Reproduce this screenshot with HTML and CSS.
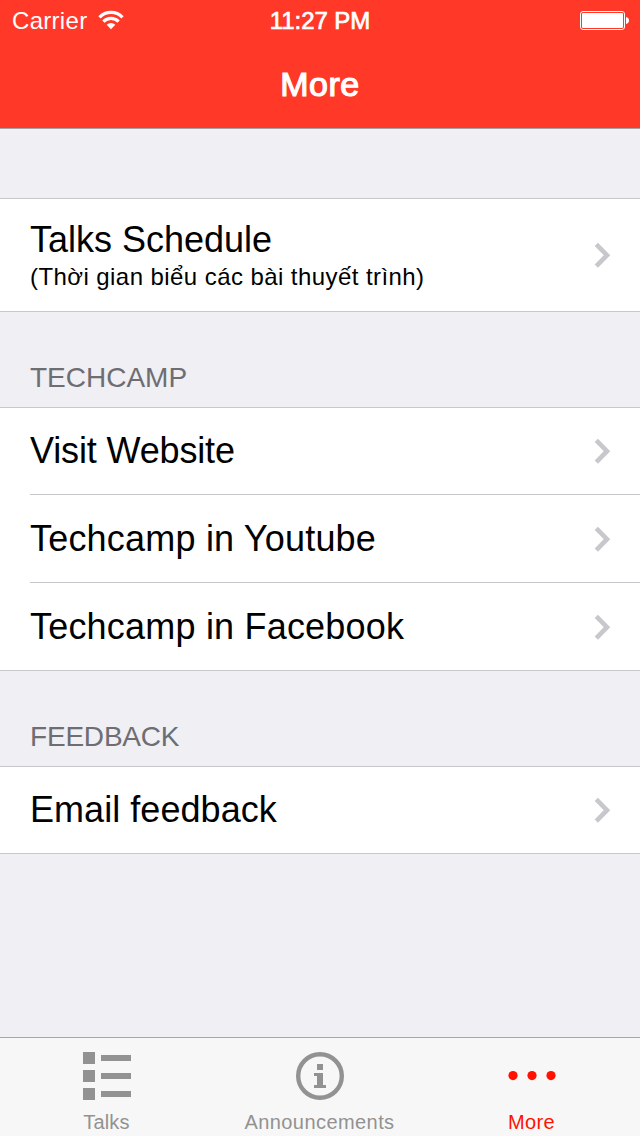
FILE: index.html
```html
<!DOCTYPE html>
<html lang="en">
<head>
<meta charset="utf-8">
<title>More</title>
<link rel="stylesheet" href="styles.css">
</head>
<body>
<svg class="defs" width="0" height="0" aria-hidden="true">
  <symbol id="chevron" viewBox="0 0 20 30"><path d="M4.3 4.3 15 15.2 4.3 26.1" fill="none" stroke="#c7c7cc" stroke-width="4.6"/></symbol>
</svg>
<div class="screen">
  <header class="navbar">
    <div class="status">
      <div class="status-left">
        <span class="carrier">Carrier</span>
        <svg class="wifi" width="26" height="20" viewBox="0 0 26 20">
          <g fill="none" stroke="#fff" stroke-width="3.2">
            <path d="M1.5 7.3a16 16 0 0 1 23 0"/>
            <path d="M5.4 11.6a10.6 10.6 0 0 1 15.2 0"/>
          </g>
          <path d="M8.7 14.8a6 6 0 0 1 8.6 0L13 19.2z" fill="#fff"/>
        </svg>
      </div>
      <span class="clock">11:27 PM</span>
      <div class="status-right">
        <svg class="battery" width="50" height="20" viewBox="0 0 50 20">
          <rect x=".5" y=".5" width="44" height="18" rx="2.5" fill="none" stroke="#fff"/>
          <rect x="2" y="2" width="41" height="15" rx="1" fill="#fff"/>
          <path d="M46 6q3 .6 3 3.5T46 13z" fill="#fff"/>
        </svg>
      </div>
    </div>
    <h1 class="title">More</h1>
  </header>

  <main class="content">
    <ul class="group first">
      <li class="row tall">
        <div class="texts"><span class="label talks">Talks Schedule</span><span class="sub">(Thời gian biểu các bài thuyết trình)</span></div>
        <svg class="chevron"><use href="#chevron"/></svg>
      </li>
    </ul>
    <h2 class="section techcamp">TECHCAMP</h2>
    <ul class="group">
      <li class="row"><span class="label website">Visit Website</span><svg class="chevron"><use href="#chevron"/></svg></li>
      <li class="row"><span class="label youtube">Techcamp in Youtube</span><svg class="chevron"><use href="#chevron"/></svg></li>
      <li class="row"><span class="label facebook">Techcamp in Facebook</span><svg class="chevron"><use href="#chevron"/></svg></li>
    </ul>
    <h2 class="section feedback">FEEDBACK</h2>
    <ul class="group">
      <li class="row"><span class="label email">Email feedback</span><svg class="chevron"><use href="#chevron"/></svg></li>
    </ul>
  </main>

  <nav class="tabbar">
    <a class="tab tab-talks">
      <svg width="48" height="48" viewBox="0 0 48 48" fill="#929292"><path d="M0 0h12v12H0zM0 18h12v12H0zM0 36h12v12H0zM18 3h30v6H18zM18 21h30v6H18zM18 39h30v6H18z"/></svg>
      <span>Talks</span>
    </a>
    <a class="tab tab-news">
      <svg width="48" height="48" viewBox="0 0 48 48" fill="#929292"><circle cx="24" cy="24" r="21.8" fill="none" stroke="#929292" stroke-width="4.4"/><path d="M21 12h6v6h-6zM18 21h9v12h3v3H18v-3h3v-9h-3z"/></svg>
      <span>Announcements</span>
    </a>
    <a class="tab tab-more">
      <svg width="48" height="48" viewBox="0 0 48 48" fill="#ff1300"><circle cx="5" cy="23.6" r="4.6"/><circle cx="24" cy="23.6" r="4.6"/><circle cx="43" cy="23.6" r="4.6"/></svg>
      <span>More</span>
    </a>
  </nav>
</div>
</body>
</html>
```

FILE: styles.css
```css
* { box-sizing: border-box; }
body {
  margin: 0;
  font-family: "Liberation Sans", Arial, sans-serif;
  color: #000;
}
.defs { display: block; }
.screen {
  display: flex;
  flex-direction: column;
  width: 640px;
  height: 1136px;
  background: #efeff4;
  overflow: hidden;
}
.navbar {
  height: 129px;
  background: #ff3828;
  border-bottom: 1px solid #a5a0a5;
  color: #fff;
}
.status {
  display: grid;
  grid-template-columns: 1fr auto 1fr;
  height: 40px;
  padding: 0 10px 0 12px;
  font-size: 24px;
  line-height: 41px;
}
.status-left { display: flex; }
.carrier { width: 86px; letter-spacing: .3px; }
.wifi { margin-top: 10px; }
.clock { margin-right: 2px; letter-spacing: -.05px; -webkit-text-stroke: .7px #fff; }
.status-right { display: flex; justify-content: flex-end; }
.battery { margin-top: 11px; }
.title {
  margin: 0;
  font-size: 34px;
  font-weight: 400;
  line-height: 88px;
  letter-spacing: .5px;
  text-align: center;
  -webkit-text-stroke: 1.2px #fff;
}
.content { flex: 1; }
.group {
  margin: 0;
  padding: 0 0 0 30px;
  list-style: none;
  background: #fff;
  border-top: 1px solid #c8c7cc;
  border-bottom: 1px solid #c8c7cc;
}
.first { margin-top: 69px; }
.row {
  display: flex;
  align-items: center;
  justify-content: space-between;
  height: 88px;
  padding-right: 28px;
  border-bottom: 1px solid #c8c7cc;
}
.row:first-child { height: 87px; }
.row:last-child { height: 87px; border-bottom: 0; }
.row:only-child { height: 86px; }
.row.tall { height: 112px; }
.texts { display: flex; flex-direction: column; padding-top: 2px; }
.label { font-size: 36px; line-height: 42px; white-space: nowrap; }
.website { letter-spacing: -.15px; }
.youtube, .facebook { letter-spacing: .2px; }
.email { letter-spacing: .05px; }
.sub { font-size: 24px; line-height: 32px; letter-spacing: .43px; white-space: nowrap; }
.chevron { width: 20px; height: 30px; }
.section {
  height: 95px;
  margin: 0;
  padding: 50px 30px 0;
  color: #6d6d72;
  font-size: 28px;
  font-weight: 400;
  line-height: 32px;
}
.feedback { letter-spacing: -.2px; }
.tabbar {
  display: grid;
  grid-template-columns: 214px 212px 211px;
  height: 99px;
  background: #f7f7f7;
  border-top: 1px solid #a5a5aa;
}
.tab {
  display: flex;
  flex-direction: column;
  align-items: center;
  padding-top: 14px;
  color: #929292;
  font-size: 20px;
}
.tab span { margin-top: 10px; line-height: 24px; letter-spacing: .3px; }
.tab-talks span { margin-right: 1px; letter-spacing: .2px; }
.tab-news span { margin-right: 1px; letter-spacing: .43px; }
.tab-more { color: #ff1300; }
```
